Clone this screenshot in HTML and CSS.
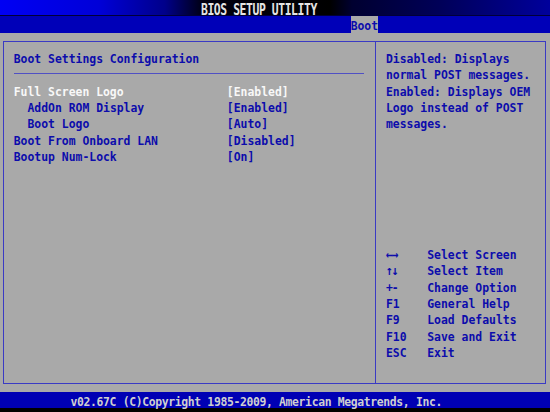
FILE: index.html
```html
<!DOCTYPE html>
<html lang="en">

<head>
    <meta charset="UTF-8">
    <meta name="viewport" content="width=device-width, initial-scale=1.0">
    <title>BIOS Setup Utility</title>
    <link rel="stylesheet" href="styles.css">
</head>

<body>
    <div class="screen">
        <div class="titlebar"><span class="title">BIOS SETUP UTILITY</span></div>

        <div class="menubar"><span class="tab"><span class="glyphs">Boot</span></span></div>

        <div class="workspace">
            <div class="panel">
                <div class="settings">
                    <div class="row heading">Boot Settings Configuration</div>
                    <div class="rule"></div>
                    <div class="row option selected">
                        <span class="label">Full Screen Logo</span>
                        <span class="value">[Enabled]</span>
                    </div>
                    <div class="row option sub">
                        <span class="label">AddOn ROM Display</span>
                        <span class="value">[Enabled]</span>
                    </div>
                    <div class="row option sub">
                        <span class="label">Boot Logo</span>
                        <span class="value">[Auto]</span>
                    </div>
                    <div class="row option">
                        <span class="label">Boot From Onboard LAN</span>
                        <span class="value">[Disabled]</span>
                    </div>
                    <div class="row option">
                        <span class="label">Bootup Num-Lock</span>
                        <span class="value">[On]</span>
                    </div>
                </div>

                <div class="help">
                    <div class="help-text">
                        <div class="row">Disabled: Displays</div>
                        <div class="row">normal POST messages.</div>
                        <div class="row">Enabled: Displays OEM</div>
                        <div class="row">Logo instead of POST</div>
                        <div class="row">messages.</div>
                    </div>

                    <div class="keys">
                        <div class="row key"><span class="arrows">&larr;&rarr;</span><span>Select Screen</span></div>
                        <div class="row key"><span class="arrows">&uarr;&darr;</span><span>Select Item</span></div>
                        <div class="row key"><span class="arrows">+-</span><span>Change Option</span></div>
                        <div class="row key"><span>F1</span><span>General Help</span></div>
                        <div class="row key"><span>F9</span><span>Load Defaults</span></div>
                        <div class="row key"><span>F10</span><span>Save and Exit</span></div>
                        <div class="row key"><span>ESC</span><span>Exit</span></div>
                    </div>
                </div>
            </div>
        </div>

        <div class="footer"><span class="glyphs">v02.67C (C)Copyright 1985-2009, American Megatrends, Inc.</span></div>
    </div>
</body>

</html>
```

FILE: styles.css
```css
/* 80x25 text screen: 6.875px columns, 16.33px rows */
:root {
    --col: 6.875px;
    --row: 16.33px;
    --gray: #a9a9a9;
    --blue: #0c0cac;
    --line: #3a3ac4;
}

html,
body {
    margin: 0;
    overflow: hidden;
    background: #000;
}

.screen {
    width: 550px;
    height: 412px;
    background: #000;
    font-family: "DejaVu Sans Mono", monospace;
    font-weight: bold;
    font-size: 11.42px;
    color: var(--blue);
}

/* the VGA font is taller than it is wide, so stretch each text line from its baseline */
.row {
    height: var(--row);
    line-height: var(--row);
    padding-top: 1.6px;
    box-sizing: border-box;
    white-space: pre;
    transform: scaleY(1.15);
    transform-origin: 0 13.7px;
}

.titlebar {
    height: var(--row);
    box-sizing: border-box;
    border-bottom: 1px solid #000038;
    background: linear-gradient(to right, #0000f4 0%, #0000d8 18%, #00008a 30%, #000010 37%, #000000 60%, #000030 64%, #000058 80%, #00009c 100%);
    padding: 2.9px 0 0 201px;
    line-height: var(--row);
}

.title {
    display: inline-block;
    letter-spacing: -0.43px;
    color: #e4e4e4;
    white-space: pre;
    transform: scaleY(1.32);
    transform-origin: 0 12.1px;
}

.menubar {
    height: var(--row);
    background: #0000b8;
    padding-left: calc(var(--col) * 51);
}

.tab {
    display: inline-block;
    width: calc(var(--col) * 4);
    height: 100%;
    background: var(--gray);
    line-height: var(--row);
    padding-top: 2px;
    box-sizing: border-box;
    vertical-align: top;
}

.glyphs {
    display: inline-block;
    white-space: pre;
    transform: scaleY(1.14);
    transform-origin: 0 12.1px;
}

.workspace {
    height: calc(var(--row) * 22);
    background: var(--gray);
    padding-top: calc(var(--row) / 2);
    box-sizing: border-box;
}

.panel {
    display: flex;
    width: 543px;
    height: calc(var(--row) * 21);
    margin-left: 3.4px;
    border: 1px solid var(--line);
    box-sizing: border-box;
}

.settings {
    width: 371.25px;
    border-right: 1px solid var(--line);
    box-sizing: border-box;
    padding: calc(var(--row) / 2 - 1px) 0 0 9.35px;
}

.rule {
    width: calc(var(--col) * 51);
    height: 1px;
    margin: calc(var(--row) / 2 - 0.5px) 0;
    background: #5050c4;
}

.option {
    display: grid;
    grid-template-columns: calc(var(--col) * 31) auto;
}

.sub .label {
    padding-left: calc(var(--col) * 2);
}

.selected {
    color: #f8f8f8;
}

.help {
    flex: 1;
    padding: calc(var(--row) / 2 - 1px) 0 0 10.35px;
}

.keys {
    margin-top: calc(var(--row) * 7);
}

.key {
    display: grid;
    grid-template-columns: calc(var(--col) * 6) auto;
}

.arrows {
    letter-spacing: -1px;
}

.footer {
    height: var(--row);
    line-height: var(--row);
    padding: 2px 0 0 70.5px;
    box-sizing: border-box;
    background: #0000b4;
    color: #cfcfcf;
    letter-spacing: -0.35px;
}
```
